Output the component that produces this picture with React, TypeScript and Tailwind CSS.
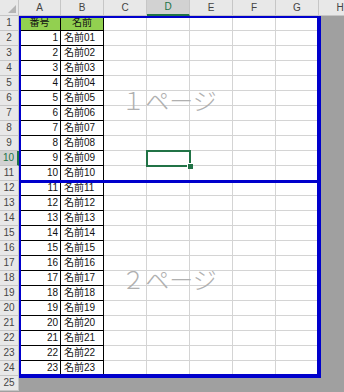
import React from "react";

const cols = ["A", "B", "C", "D", "E", "F", "G", "H"];
const rows = Array.from({ length: 25 }, (_, i) => i + 1);
const font = "font-['Liberation_Sans','Noto_Sans_CJK_JP',sans-serif]";

const Cell = ({ r, c }: { r: number; c: string }) => {
    if (c === "H" || r === 25) {
        return <div className="bg-[#a0a0a0]" />;
    }
    if (c === "A" || c === "B") {
        const head = r === 1;
        const text = head ? (c === "A" ? "番号" : "名前") : c === "A" ? String(r - 1) : "名前" + String(r - 1).padStart(2, "0");
        return (
            <div
                className={`flex items-center border-r border-b border-black text-[10px] leading-none text-[#111] ${
                    head ? "bg-[#92d050] justify-center" : c === "A" ? "bg-white justify-end pr-[2px]" : "bg-white justify-start pl-[3px]"
                }`}
            >
                {text}
            </div>
        );
    }
    return <div className="bg-white border-r border-b border-[#d4d4d4]" />;
};

const App = () => {
    return (
        <main className={`relative w-[344px] h-[392px] overflow-hidden bg-[#a0a0a0] ${font}`}>
            <div className="grid grid-cols-[19px_42px_43px_43px_43px_43px_43px_43px_43px] grid-rows-[16px_repeat(25,15px)] w-[362px]">
                <div className="relative bg-[#e8e8e8] border-r border-b border-[#c6c6c6]">
                    <svg className="absolute right-[2px] bottom-[2px]" width="8" height="8" viewBox="0 0 8 8">
                        <polygon points="8,0 8,8 0,8" fill="#b4b4b4" />
                    </svg>
                </div>
                {cols.map((c) => (
                    <div
                        key={c}
                        className={`flex items-center justify-center text-[10px] leading-none border-r border-[#c6c6c6] ${
                            c === "D" ? "bg-[#d2d2d2] text-[#217346] border-b-2 border-b-[#217346]" : "bg-[#e8e8e8] text-[#444] border-b border-b-[#c6c6c6]"
                        }`}
                    >
                        {c}
                    </div>
                ))}
                {rows.map((r) => (
                    <React.Fragment key={r}>
                        <div
                            className={`flex items-center justify-center text-[10px] leading-none border-b border-[#c6c6c6] ${
                                r === 10 ? "bg-[#d2d2d2] text-[#217346] border-r-2 border-r-[#217346]" : "bg-[#e8e8e8] text-[#444] border-r border-r-[#c6c6c6]"
                            }`}
                        >
                            {r}
                        </div>
                        {cols.map((c) => (
                            <Cell key={c} r={r} c={c} />
                        ))}
                    </React.Fragment>
                ))}
            </div>

            {/* page break preview overlay */}
            <div className="absolute left-[19px] top-[16px] w-[302px] h-[362px] flex flex-col border-t-2 border-l-2 border-r-4 border-b-4 border-[#0000cc] pointer-events-none">
                <div className="h-[162px] flex items-center justify-center pt-[1px]">
                    <span className="text-[24px] leading-none font-light text-[#b0b0b0] font-['Noto_Sans_CJK_JP',sans-serif]">１ページ</span>
                </div>
                <div className="h-[3px] bg-[#0000cc]" />
                <div className="flex-1 flex items-center justify-center">
                    <span className="text-[24px] leading-none font-light text-[#b0b0b0] font-['Noto_Sans_CJK_JP',sans-serif]">２ページ</span>
                </div>
            </div>

            {/* selected cell D10 */}
            <div className="absolute left-[146px] top-[150px] w-[45px] h-[17px] border-2 border-[#217346]" />
            <div className="absolute left-[187px] top-[163px] w-[6px] h-[6px] bg-[#217346] border-l border-t border-white" />
        </main>
    );
};

export default App;
